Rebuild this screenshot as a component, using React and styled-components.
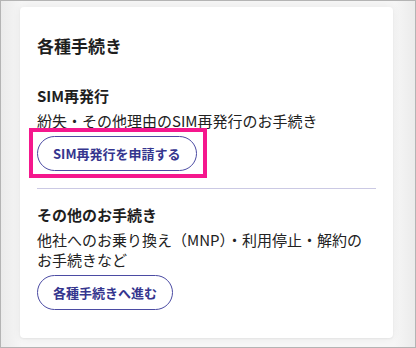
import React from "react";
import styled, { createGlobalStyle } from "styled-components";

const GlobalStyle = createGlobalStyle`
  html, body {
    margin: 0;
    padding: 0;
    background: #f2f2f2;
  }
  body {
    font-family: "Noto Sans CJK JP", "Noto Sans", sans-serif;
    color: #1e1e1e;
  }
`;

const procedures = [
  {
    title: "SIM再発行",
    lines: ["紛失・その他理由のSIM再発行のお手続き"],
    action: "SIM再発行を申請する",
    highlighted: true,
  },
  {
    title: "その他のお手続き",
    lines: ["他社へのお乗り換え（MNP）・利用停止・解約の", "お手続きなど"],
    action: "各種手続きへ進む",
  },
];

function App() {
  return (
    <>
      <GlobalStyle />
      <Frame>
        <Card>
          <Heading>各種手続き</Heading>
          {procedures.map((item, i) => (
            <Section key={item.title} $first={i === 0}>
              <SectionTitle>{item.title}</SectionTitle>
              <Description>
                {item.lines.map((line) => (
                  <span key={line}>{line}</span>
                ))}
              </Description>
              <ActionButton $highlighted={item.highlighted}>
                {item.action}
              </ActionButton>
            </Section>
          ))}
        </Card>
      </Frame>
    </>
  );
}

export default App;

const Frame = styled.div`
  width: 416px;
  height: 348px;
  box-sizing: border-box;
  border: 1px solid #b4b4b4;
  background: linear-gradient(90deg, #ebebeb 0%, #f6f6f6 5%, #f6f6f6 95%, #ebebeb 100%);
  padding: 6px 0 0 19px;
  overflow: hidden;
`;

const Card = styled.div`
  width: 373px;
  height: 331px;
  box-sizing: border-box;
  background: #fff;
  border-radius: 4px;
  box-shadow: 0 0 8px rgba(0, 0, 0, 0.06), 0 1px 2px rgba(0, 0, 0, 0.05);
  padding: 27px 17px 0 17px;
  display: flex;
  flex-direction: column;
`;

const Heading = styled.h2`
  margin: 0;
  font-size: 17px;
  font-weight: 700;
  line-height: 24px;
  color: #1e1e1e;
`;

const Section = styled.section`
  display: flex;
  flex-direction: column;
  align-items: flex-start;
  padding: ${(p) => (p.$first ? "27px 0 17px" : "15px 0 0")};
  border-bottom: ${(p) => (p.$first ? "1px solid #cbc9e4" : "none")};
`;

const SectionTitle = styled.h3`
  margin: 0;
  font-size: 15px;
  font-weight: 700;
  line-height: 21px;
`;

const Description = styled.p`
  margin: 5px 0 5px;
  font-size: 15px;
  line-height: 20px;
  display: flex;
  flex-direction: column;
  color: #222;
`;

const ActionButton = styled.button`
  position: relative;
  height: 35px;
  padding: 0 15px;
  border: 1px solid #4b4ba3;
  border-radius: 18px;
  background: #fff;
  color: #35358e;
  font-family: "Noto Sans CJK JP", "Noto Sans", sans-serif;
  font-size: 13px;
  font-weight: 700;
  cursor: pointer;

  &::after {
    content: "";
    display: ${(p) => (p.$highlighted ? "block" : "none")};
    position: absolute;
    top: -9px;
    left: -9px;
    right: -11px;
    bottom: -8px;
    border: 4px solid #f5178d;
    pointer-events: none;
  }
`;
